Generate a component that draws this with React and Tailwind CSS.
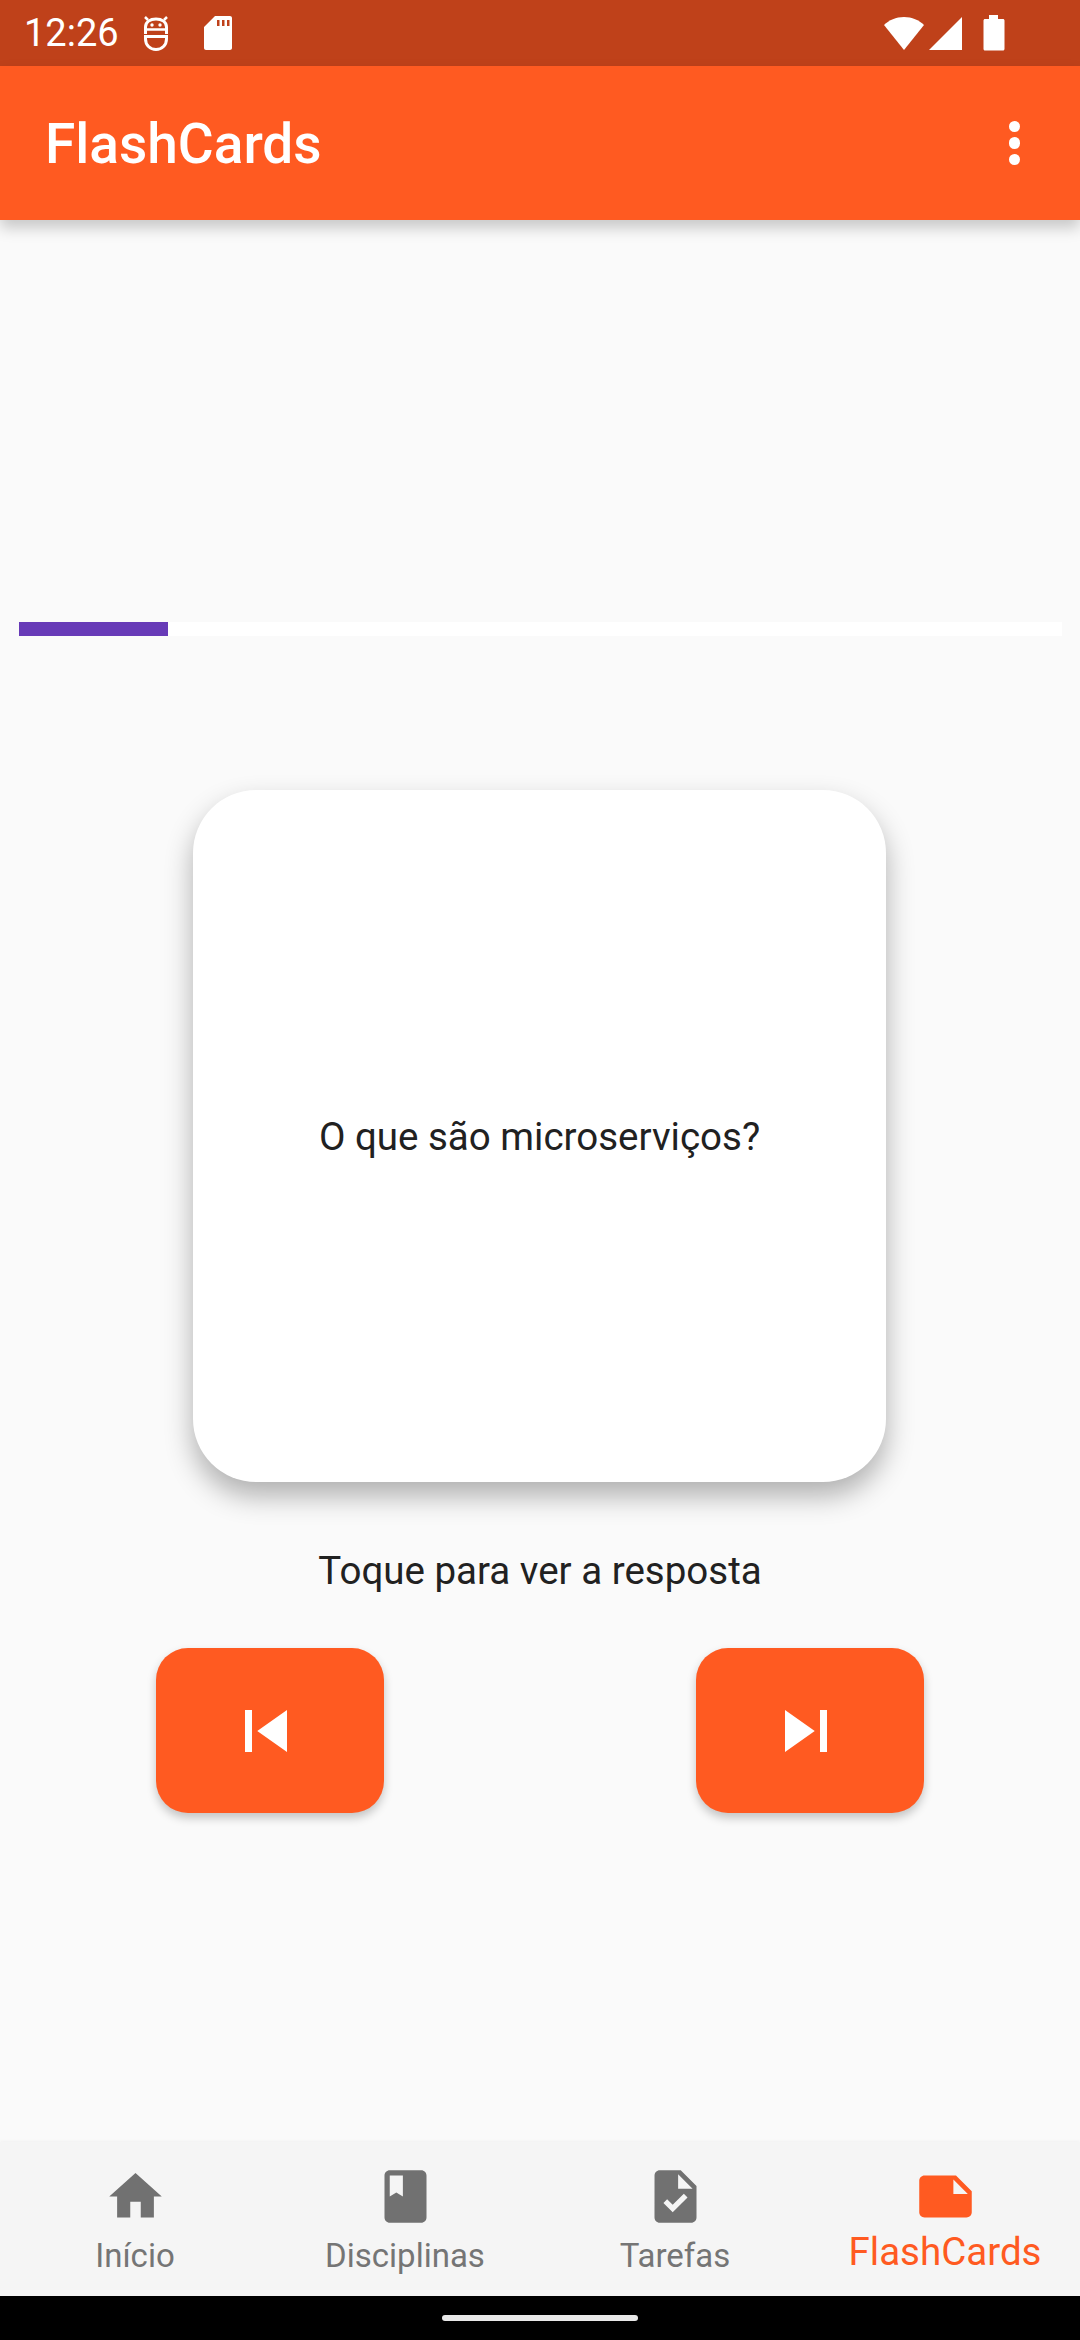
const navItems = [
  {
    label: "Início",
    active: false,
    path: "M10 20v-6h4v6h5v-8h3L12 3 2 12h3v8z",
  },
  {
    label: "Disciplinas",
    active: false,
    path: "M18 2H6c-1.1 0-2 .9-2 2v16c0 1.1.9 2 2 2h12c1.1 0 2-.9 2-2V4c0-1.1-.9-2-2-2zM6 4h5v8l-2.5-1.5L6 12V4z",
  },
  {
    label: "Tarefas",
    active: false,
    path: "M14 2H6c-1.1 0-1.99.9-1.99 2L4 20c0 1.1.89 2 1.99 2H18c1.1 0 2-.9 2-2V8l-6-6zm-3.06 16L7.4 14.46l1.41-1.41 2.12 2.12 4.24-4.24 1.41 1.41L10.94 18zM13 9V3.5L18.5 9H13z",
  },
  {
    label: "FlashCards",
    active: true,
    path: "M22 10l-6-6H4c-1.1 0-2 .9-2 2v12.01c0 1.1.9 1.99 2 1.99l16-.01c1.1 0 2-.89 2-1.99v-8zm-7-4.5l5.5 5.5H15V5.5z",
  },
];

function StatusBar() {
  return (
    <div className="flex h-[66px] shrink-0 items-center justify-between bg-[#bf411a] pl-[24px] pr-[75px] text-white">
      <div className="flex items-center">
        <span className="text-[38px] leading-[42px]">12:26</span>
        {/* android head */}
        <svg className="ml-[24px] h-[36px] w-[26px]" viewBox="0 0 26 36" fill="none" stroke="white" strokeWidth="3">
          <path d="M2.500 19V12C2.500 7 7 4 13 4s10.500 3 10.500 8v7" />
          <path d="M2.500 12v2.500h21" strokeWidth="2.500" />
          <path d="M2.500 21.500h21V24c0 6-4.500 10.500-10.500 10.500S2.500 30 2.500 24z" />
          <path d="M5 5L2 2M21 5l3-3" strokeWidth="2.500" />
          <circle cx="9" cy="10" r="1.700" fill="white" stroke="none" />
          <circle cx="17" cy="10" r="1.700" fill="white" stroke="none" />
        </svg>
        {/* sd card */}
        <svg className="ml-[34px] h-[36px] w-[30px]" viewBox="0 0 30 36" fill="white">
          <path fillRule="evenodd" d="M12 1h15c1.100 0 2 .9 2 2v30c0 1.100-.9 2-2 2H3c-1.100 0-2-.9-2-2V12zM14 5v6h2.500V5zm5 0v6h2.500V5zm5 0v6h2.500V5z" />
        </svg>
      </div>
      <div className="flex items-center">
        {/* wifi */}
        <svg className="h-[36px] w-[42px]" viewBox="0 0 42 36" fill="white">
          <path d="M1 10C6 5 13 2 21 2s15 3 20 8L21 35z" />
        </svg>
        {/* signal */}
        <svg className="ml-[3px] h-[36px] w-[35px]" viewBox="0 0 35 36" fill="white">
          <path d="M34 2v33H1z" />
        </svg>
        {/* battery */}
        <svg className="ml-[20px] h-[38px] w-[22px]" viewBox="0 0 22 38" fill="white">
          <path d="M6 1h9v4h5c.8 0 1.500.7 1.500 1.500V35c0 .8-.7 1.500-1.500 1.500H2c-.8 0-1.500-.7-1.500-1.500V6.500C.5 5.700 1.200 5 2 5h4z" />
        </svg>
      </div>
    </div>
  );
}

function AppBar() {
  return (
    <div className="relative z-10 flex h-[154px] shrink-0 items-center justify-between bg-[#ff5a21] pl-[45px] pr-[60px] shadow-[0_8px_14px_rgba(0,0,0,0.2)]">
      <span className="pt-[2px] text-[55px] font-medium leading-[64px] text-white">FlashCards</span>
      <div className="flex flex-col gap-[5px]">
        <div className="size-[11.5px] rounded-full bg-white" />
        <div className="size-[11.5px] rounded-full bg-white" />
        <div className="size-[11.5px] rounded-full bg-white" />
      </div>
    </div>
  );
}

function SkipButton({ children }) {
  return (
    <button className="flex h-[165px] w-[228px] items-center justify-center rounded-[32px] bg-[#ff5a21] shadow-[0_5px_10px_rgba(0,0,0,0.22)]">
      {children}
    </button>
  );
}

function BottomNav() {
  return (
    <div className="flex h-[154px] shrink-0 bg-[#f5f5f5] shadow-[0_-1px_3px_rgba(0,0,0,0.04)]">
      {navItems.map((item) => (
        <div key={item.label} className="flex w-[270px] flex-col items-center pt-[23px]">
          <svg className="size-[63px]" viewBox="0 0 24 24" fill={item.active ? "#ff5a21" : "#717171"}>
            <path d={item.path} />
          </svg>
          {item.active ? (
            <span className="mt-[1px] text-[38.5px] leading-[45px] text-[#ff5a21]">{item.label}</span>
          ) : (
            <span className="mt-[8px] text-[33px] leading-[39px] text-[#757575]">{item.label}</span>
          )}
        </div>
      ))}
    </div>
  );
}

export default function App() {
  return (
    <div className="flex h-[2340px] w-[1080px] flex-col overflow-hidden bg-[#fafafa] font-['Roboto',sans-serif]">
      <StatusBar />
      <AppBar />

      <div className="flex flex-1 flex-col pt-[402px]">
        {/* progress */}
        <div className="ml-[19px] mr-[18px] h-[14px] bg-white">
          <div className="h-full w-[149px] bg-[#673ab7]" />
        </div>

        {/* card */}
        <div className="ml-[193px] mt-[154px] flex h-[692px] w-[693px] items-center justify-center rounded-[63px] bg-white shadow-[0_14px_28px_rgba(0,0,0,0.3)]">
          <span className="pt-[1px] text-[38.5px] leading-[45px] text-[#212121]">O que são microserviços?</span>
        </div>

        <p className="mt-[66px] text-center text-[38.5px] leading-[45px] text-[#212121]">Toque para ver a resposta</p>

        <div className="mt-[55px] flex justify-between px-[156px]">
          <SkipButton>
            <svg className="mr-[8px] size-[84px]" viewBox="0 0 24 24" fill="white">
              <path d="M6 6h2v12H6zm3.500 6l8.500 6V6z" />
            </svg>
          </SkipButton>
          <SkipButton>
            <svg className="mr-[8px] size-[84px]" viewBox="0 0 24 24" fill="white">
              <path d="M6 18l8.500-6L6 6v12zM16 6v12h2V6h-2z" />
            </svg>
          </SkipButton>
        </div>
      </div>

      <BottomNav />

      <div className="flex h-[44px] shrink-0 items-center justify-center bg-black">
        <div className="h-[6px] w-[196px] rounded-full bg-[#e8e8e8]" />
      </div>
    </div>
  );
}
